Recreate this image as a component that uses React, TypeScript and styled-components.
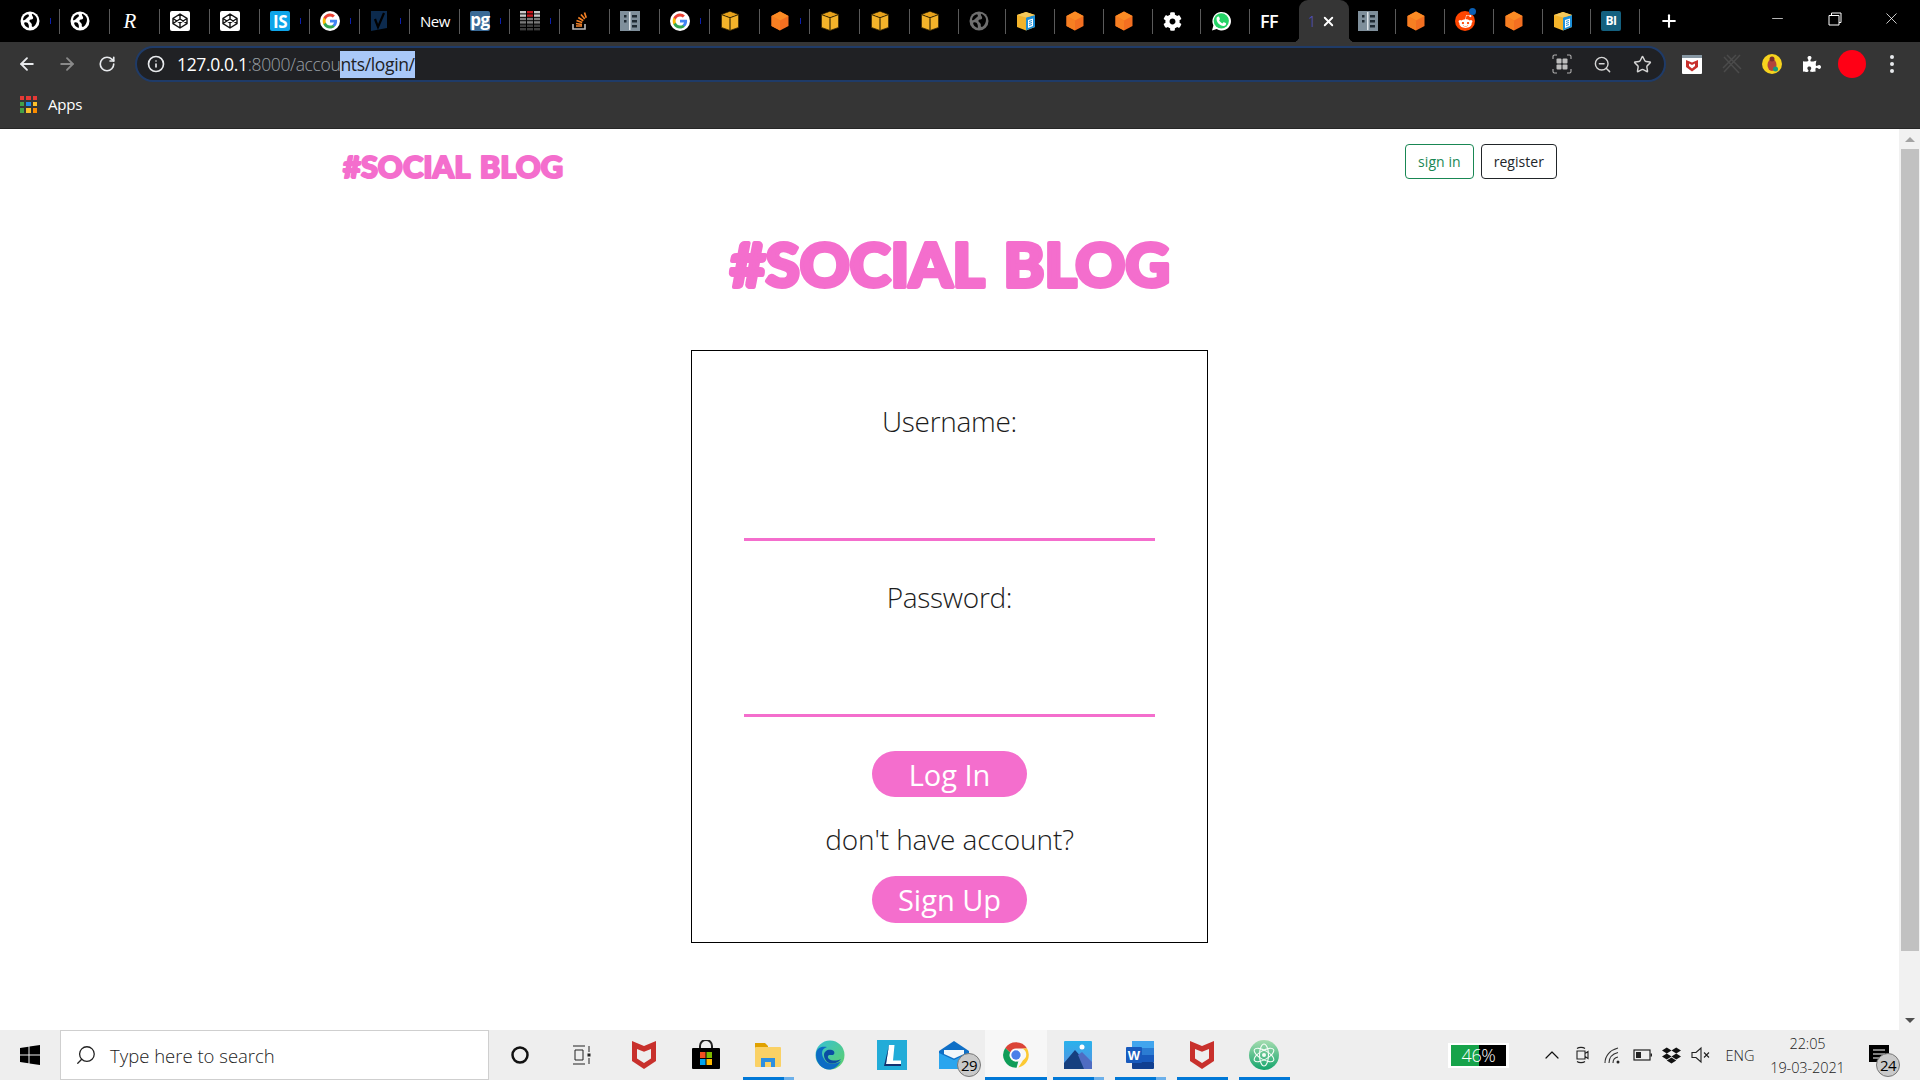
import React from 'react';
import styled, { createGlobalStyle } from 'styled-components';
import { ArrowLeft, ArrowRight, RotateCw, Info, ZoomOut, Star, Plus, X, Minus, Search, ChevronUp } from 'lucide-react';
import { FaCog, FaDropbox, FaPuzzlePiece, FaRedditAlien } from 'react-icons/fa';

const PINK = '#f46ecd';
const UI_FONT = '"Open Sans", "Noto Sans", sans-serif';

const Global = createGlobalStyle`
  html, body { margin: 0; padding: 0; height: 1080px; overflow: hidden; background: #fff; }
  * { box-sizing: border-box; }
  body { font-family: ${UI_FONT}; }
`;

const Shell = styled.div`
  width: 1920px; height: 1080px; display: flex; flex-direction: column; overflow: hidden;
`;

/* ---------- tab strip ---------- */
const TabStrip = styled.div`
  height: 42px; background: #000; display: flex; align-items: stretch; padding-left: 10px; flex: none;
`;
const Tab = styled.div<{ $w: number; $pad: number; $last?: boolean }>`
  width: ${p => p.$w}px; padding-left: ${p => p.$pad}px; flex: none; display: flex; align-items: center; position: relative;
  &::after {
    content: ''; position: absolute; right: 0; top: 9px; height: 25px; width: 1px; background: #5a5a5a;
    display: ${p => (p.$last ? 'none' : 'block')};
  }
`;
const TabMark = styled.i`
  width: 1px; height: 6px; background: #0b1fb0; margin-left: 10px; flex: none;
`;
const IconText = styled.span<{ $size: number; $weight?: number }>`
  color: #fff; font-size: ${p => p.$size}px; font-weight: ${p => p.$weight ?? 400}; font-family: ${UI_FONT}; letter-spacing: -0.5px; white-space: nowrap;
`;
const ActiveTab = styled.div`
  width: 50px; flex: none; background: #353535; border-radius: 9px 9px 0 0; position: relative; display: flex;
  align-items: center; color: #fff; padding-left: 9px; gap: 5px;
  &::before, &::after { content: ''; position: absolute; bottom: 0; width: 6px; height: 6px; }
  &::before { left: -6px; background: radial-gradient(circle at 0 0, #000 6px, #353535 6.5px); }
  &::after { right: -6px; background: radial-gradient(circle at 100% 0, #000 6px, #353535 6.5px); }
`;
const TabNumber = styled.span`
  color: #5a55d8; font-size: 14px; font-weight: 300; font-family: ${UI_FONT};
`;
const NewTabButton = styled.div`
  width: 57px; display: flex; align-items: center; justify-content: center; color: #fff; flex: none;
`;
const WindowControls = styled.div`
  margin-left: auto; display: flex;
`;
const WindowControl = styled.div`
  width: 57px; height: 37px; display: flex; align-items: center; justify-content: center; color: #fff;
`;

/* ---------- toolbar ---------- */
const Toolbar = styled.div`
  height: 44px; background: #353535; display: flex; align-items: center; padding: 0 8px 0 7px; flex: none;
`;
const ToolCell = styled.div<{ $dim?: boolean }>`
  width: 40px; height: 36px; flex: none; display: flex; align-items: center; justify-content: center;
  color: ${p => (p.$dim ? '#8a8a8a' : '#e8eaed')};
`;
const AddressBar = styled.div`
  flex: 1; height: 36px; margin: 0 6px 0 8px; background: #202124; border: 2px solid #1f3b68; border-radius: 18px;
  display: flex; align-items: center; padding: 0 2px 0 10px; color: #e8eaed;
`;
const Url = styled.div`
  margin-left: 12px; font-size: 17.5px; font-family: ${UI_FONT}; display: flex; align-items: center; letter-spacing: -0.35px;
  flex: 1; font-weight: 300; white-space: nowrap;
`;
const UrlHost = styled.span` color: #fff; font-weight: 400; `;
const UrlPath = styled.span` color: #9aa0a6; `;
const UrlSelected = styled.span`
  background: #a9c8f8; color: #202124; line-height: 27px; font-weight: 400;
`;
const BookmarkBar = styled.div`
  height: 43px; background: #353535; display: flex; align-items: center; padding: 0 0 6px 20px; gap: 11px; flex: none;
  border-bottom: 1px solid #262626;
`;
const AppsGrid = styled.div`
  width: 17px; height: 17px; display: grid; grid-template-columns: repeat(3, 1fr); grid-template-rows: repeat(3, 1fr); gap: 2px;
`;
const AppsDot = styled.i<{ $c: string }>` background: ${p => p.$c}; `;
const BookmarkLabel = styled.span`
  color: #fff; font-size: 15px; font-family: ${UI_FONT}; letter-spacing: -0.2px;
`;

/* ---------- page ---------- */
const Viewport = styled.div`
  flex: 1; display: flex; min-height: 0; background: #fff;
`;
const Page = styled.main`
  flex: 1; display: flex; flex-direction: column; align-items: center; padding-top: 15px; min-width: 0; color: #212529;
`;
const Nav = styled.nav`
  width: 1215px; height: 35px; display: flex; align-items: flex-start; justify-content: space-between;
`;
const NavLogo = styled.svg`
  width: 222px; height: 30px; margin-top: 9px; overflow: visible;
`;
const NavActions = styled.div`
  display: flex; gap: 7px;
`;
const OutlineButton = styled.a<{ $c: string }>`
  height: 35px; padding: 0 12px; border: 1px solid ${p => p.$c}; border-radius: 4px; color: ${p => p.$c}; font-size: 14px;
  font-family: ${UI_FONT}; display: flex; align-items: center; letter-spacing: 0.05px; font-weight: 400;
`;
const HeroLogo = styled.svg`
  width: 444px; height: 60px; margin-top: 58px; overflow: visible; flex: none;
`;
const Card = styled.form`
  width: 517px; height: 593px; margin-top: 53px; border: 1px solid #000; padding: 49px 0 0; display: flex;
  flex-direction: column; align-items: center; flex: none;
`;
const Label = styled.label`
  font-size: 28px; line-height: 42px; font-weight: 300; color: #1c1c1c; font-family: ${UI_FONT}; letter-spacing: -0.3px;
`;
const Field = styled.input<{ $mb: number }>`
  display: block; width: 411px; height: 99px; border: none; border-bottom: 3px solid ${PINK}; background: transparent; outline: none;
  margin-bottom: ${p => p.$mb}px; flex: none;
`;
const PillButton = styled.button<{ $h: number }>`
  width: 155px; height: ${p => p.$h}px; border: none; border-radius: 24px; background: ${PINK}; color: #fff;
  font-family: ${UI_FONT}; font-size: 29px; padding: 0; flex: none; line-height: 1;
`;
const Prompt = styled.p`
  margin: 21px 0 16px; font-size: 28px; line-height: 42px; font-weight: 300; color: #1c1c1c; font-family: ${UI_FONT}; letter-spacing: -0.1px;
`;

/* ---------- scrollbar ---------- */
const Scrollbar = styled.div`
  width: 21px; flex: none; background: #f1f1f1; display: flex; flex-direction: column; align-items: center;
`;
const ScrollArrow = styled.div<{ $down?: boolean }>`
  height: 20px; width: 100%; display: flex; align-items: center; justify-content: center; margin-top: ${p => (p.$down ? 'auto' : 0)};
  &::after {
    content: ''; border-left: 5px solid transparent; border-right: 5px solid transparent;
    ${p => (p.$down ? 'border-top: 5px solid #505050;' : 'border-bottom: 5px solid #a3a3a3;')}
  }
`;
const ScrollThumb = styled.div`
  width: 18px; height: 802px; background: #c1c1c1; flex: none;
`;

/* ---------- taskbar ---------- */
const Taskbar = styled.footer`
  height: 50px; background: #eeeeee; display: flex; align-items: center; flex: none; color: #111;
`;
const StartCell = styled.div`
  width: 60px; height: 50px; display: flex; align-items: center; justify-content: center; flex: none;
`;
const SearchBox = styled.div`
  width: 429px; height: 50px; background: #fff; border: 1px solid #cfcfcf; display: flex; align-items: center; padding-left: 14px; flex: none;
`;
const SearchText = styled.span`
  margin-left: 13px; font-size: 18.5px; font-weight: 300; font-family: ${UI_FONT}; color: #222; letter-spacing: 0;
`;
const TaskCell = styled.div<{ $on?: boolean; $active?: boolean; $split?: boolean }>`
  width: 62px; height: 50px; flex: none; display: flex; align-items: center; justify-content: center; position: relative;
  background: ${p => (p.$active ? '#f7f7f7' : 'transparent')};
  &::after {
    content: ''; position: absolute; bottom: 0; left: 6px; right: 5px; height: 3px;
    background: ${p => p.$split
      ? 'linear-gradient(to right, #0078d7 0 80%, #6cb0ea 80% 100%)'
      : '#0078d7'};
    display: ${p => (p.$on ? 'block' : 'none')};
    ${p => p.$active ? 'left: 0; right: 0;' : ''}
  }
`;
const Badge = styled.span<{ $r: number; $b: number }>`
  position: absolute; right: ${p => p.$r}px; bottom: ${p => p.$b}px; width: 24px; height: 24px; border-radius: 50%;
  background: #c9c9c9; border: 1px solid #777; display: flex; align-items: center; justify-content: center; font-size: 15px;
  color: #000; font-family: ${UI_FONT}; font-weight: 400; letter-spacing: -0.5px;
`;
const Tray = styled.div`
  margin-left: auto; display: flex; align-items: center; padding-right: 12px; height: 50px;
`;
const Meter = styled.div`
  width: 61px; height: 25px; background: #fff; padding: 2px 3px; margin-right: 28px; display: flex; position: relative; flex: none;
`;
const MeterFill = styled.div`
  flex: 1; display: flex; align-items: center; justify-content: center; color: #fff; font-size: 18px; font-weight: 300; font-family: ${UI_FONT};
  background: linear-gradient(to right, #16a34a 0 51%, #000 51% 100%); letter-spacing: -0.3px;
`;
const TrayCell = styled.div<{ $w: number }>`
  width: ${p => p.$w}px; height: 50px; flex: none; display: flex; align-items: center; justify-content: center; position: relative;
`;
const TrayText = styled.span`
  font-size: 14.5px; font-family: ${UI_FONT}; font-weight: 300; color: #222;
`;
const Clock = styled.div`
  width: 85px; flex: none; display: flex; flex-direction: column; align-items: center; font-size: 14.5px; line-height: 24px;
  font-family: ${UI_FONT}; font-weight: 300; color: #222; letter-spacing: -0.1px; padding-top: 1px;
`;

/* ---------- icons ---------- */
const Svg = styled.svg<{ $s?: number }>`
  width: ${p => p.$s ?? 20}px; height: ${p => p.$s ?? 20}px; flex: none; display: block;
`;

const Cube = ({ fill = '#f3b32a' }: { fill?: string }) => (
  <Svg viewBox="0 0 20 20">
    <path d="M10 .5 18.500 3.500V16.500L10 19.500 1.500 16.500V3.500Z" fill={fill} stroke="#3a2a05" strokeWidth=".8" />
    <path d="M1.500 3.500 10 6.500 18.500 3.500M10 6.500V19.500" fill="none" stroke="#3a2a05" strokeWidth="1.200" />
    <path d="M10 1 17 3.500 10 6 3 3.500Z" fill="#e8a21b" />
  </Svg>
);
const OrangeCube = () => (
  <Svg viewBox="0 0 20 20">
    <path d="M10 .5 18.500 5V15L10 19.500 1.500 15V5Z" fill="#f36f21" />
    <path d="M10 .5 18.500 5 10 9.500 1.500 5Z" fill="#fb8b24" />
    <path d="M1.500 5 10 9.500V19.500L1.500 15Z" fill="#f77f22" />
  </Svg>
);
const BookCube = () => (
  <Svg viewBox="0 0 20 20">
    <path d="M1 4 10 1 19 4V16L10 19.500 1 16Z" fill="#f3b32a" />
    <path d="M10 6.500 19 4V16L10 19.500Z" fill="#1c8fd8" />
    <path d="M1 4 10 1 19 4 10 6.500Z" fill="#f5c95b" />
    <path d="M12 9 17 7.500V15L12 17Z" fill="#fff" />
    <path d="M13 10.500 16 9.500M13 12.500 16 11.500M13 14.500 16 13.500" stroke="#1c8fd8" strokeWidth="1" />
  </Svg>
);
const Globe = ({ disc = '#fff', land = '#000' }: { disc?: string; land?: string }) => (
  <Svg viewBox="0 0 20 20">
    <circle cx="10" cy="10" r="9.500" fill={disc} />
    <path d="M3 9C3 6 5 3.800 8 3.200 9.500 4 9 5.500 7.800 6.300 6.500 7.200 6 8.500 4.500 9 3.800 9.300 3.300 9.300 3 9Z" fill={land} />
    <path d="M12 2.800C14.500 3.600 16.500 5.500 17 8 17.200 11 16 14 13.500 15.800 12.500 16.300 11.500 15.500 11.800 14.300 12.200 13 11 12 10 11 8.800 10 9.500 8.500 11 8.500 12.800 8.600 13.500 7.500 13 6 12.500 5 11.500 4 12 2.800Z" fill={land} />
    <path d="M5 11.500C6.500 11 8 12 8.500 13.500 9 15 9 16.500 8.500 17 6 16.200 4.300 14 4 11.800Z" fill={land} />
  </Svg>
);
const Codepen = () => (
  <Svg viewBox="0 0 20 20">
    <rect width="20" height="20" rx="2" fill="#fff" />
    <path d="M10 3 17 7.500V12.500L10 17 3 12.500V7.500ZM3 7.500 10 12 17 7.500M3 12.500 10 8 17 12.500M10 3V8M10 12V17" fill="none" stroke="#111" strokeWidth="1.400" />
  </Svg>
);
const GoogleG = () => (
  <Svg viewBox="0 0 48 48">
    <circle cx="24" cy="24" r="24" fill="#fff" />
    <path fill="#4285f4" d="M41 24.500c0-1.200-.1-2.400-.3-3.500H24v6.700h9.600c-.4 2.200-1.700 4.100-3.500 5.300v4.400h5.700C39.100 34.300 41 29.800 41 24.500Z" />
    <path fill="#34a853" d="M24 42c4.700 0 8.700-1.600 11.700-4.300L30 33.300c-1.600 1.100-3.600 1.700-6 1.700-4.600 0-8.500-3.100-9.900-7.300H8.300v4.500C11.200 38 17.100 42 24 42Z" />
    <path fill="#fbbc05" d="M14.100 27.700c-.4-1.100-.6-2.300-.6-3.700s.2-2.600.6-3.700v-4.500H8.300C7.100 18.100 6.400 21 6.400 24s.7 5.900 1.900 8.200Z" />
    <path fill="#ea4335" d="M24 13c2.600 0 4.900.9 6.800 2.700l5-5C32.700 7.800 28.700 6 24 6 17.100 6 11.200 10 8.300 15.800l5.800 4.500C15.500 16.100 19.400 13 24 13Z" />
  </Svg>
);
const CheckFlag = () => (
  <Svg viewBox="0 0 20 20">
    <path d="M1 0H17V17L1 20Z" fill="#0c2a4d" />
    <path d="M5 8 8 16 14 2" fill="none" stroke="#000" strokeWidth="2.200" />
  </Svg>
);
const SquareText = styled.span<{ $bg: string; $size: number; $align?: string }>`
  width: 20px; height: 20px; background: ${p => p.$bg}; border-radius: 2px; color: #fff; font-family: ${UI_FONT}; font-size: ${p => p.$size}px;
  font-weight: 700; display: flex; align-items: ${p => p.$align ?? 'center'}; justify-content: center; flex: none; letter-spacing: -0.5px; line-height: 1;
`;
const RLogo = styled.span`
  color: #fff; font-family: "Liberation Serif", serif; font-style: italic; font-size: 21px; font-weight: 400; width: 20px; text-align: center;
`;
const BarGrid = () => (
  <Svg viewBox="0 0 20 20">
    {[0, 1, 2, 3, 4, 5].map(r =>
      [0, 1, 2].map(c => (
        <rect key={`${r}${c}`} x={c * 7} y={r * 3.4} width="6" height="2.4"
          fill={c === 1 && r < 2 ? '#c4161c' : r < 2 ? '#c8c8c8' : r < 4 ? '#7a7a7a' : '#3c3c3c'} />
      ))
    )}
  </Svg>
);
const StackOverflow = () => (
  <Svg viewBox="0 0 20 20">
    <path d="M3 13V18H15V13" fill="none" stroke="#bcbbbb" strokeWidth="1.600" />
    <path d="M6 15H12M6 12.500 12 13.500M6.500 9.500 12.200 11.500M8.300 6.500 13.300 9.700M11 3.500 14.800 8M14.500 1.500 16.200 6.800" stroke="#f48024" strokeWidth="1.700" fill="none" />
  </Svg>
);
const Columns = () => (
  <Svg viewBox="0 0 20 20">
    <rect width="20" height="20" fill="#7f8f9b" />
    <rect x="9" y="1" width="1.500" height="18" fill="#dfe5ea" />
    <rect x="12" y="4" width="5" height="2.500" fill="#1f2a33" />
    <rect x="12" y="9" width="5" height="2.500" fill="#1f2a33" />
    <rect x="12" y="14" width="5" height="2.500" fill="#1f2a33" />
    <rect x="4" y="4" width="2.500" height="2.500" fill="#1f2a33" />
    <rect x="4" y="9" width="2.500" height="2.500" fill="#1f2a33" />
  </Svg>
);
const Whatsapp = () => (
  <Svg viewBox="0 0 20 20">
    <path d="M1 19.500 2.400 14.500A9.300 9.300 0 1 1 5.700 18.100Z" fill="#fff" />
    <circle cx="10.300" cy="9.800" r="7.600" fill="#25d366" />
    <path d="M7.200 5.500c.5 0 .8 0 1 .6l.7 1.700c.1.300 0 .6-.2.800l-.6.7c.7 1.400 1.800 2.400 3.300 3.100l.8-.9c.2-.3.500-.3.800-.2l1.700.8c.4.200.5.500.4.900-.2 1.200-1.300 2-2.600 1.900C8.700 14.500 5.700 11.700 5.500 8c0-1.300.7-2.500 1.700-2.500Z" fill="#fff" />
  </Svg>
);
const RedditIcon = styled.span`
  width: 20px; height: 20px; border-radius: 50%; background: #ff4500; position: relative; display: flex; align-items: center;
  justify-content: center; color: #fff; flex: none;
  &::after {
    content: ''; position: absolute; top: -3px; right: -1px; width: 7px; height: 7px; background: #0a5fb4; border-radius: 50%;
  }
`;
const ChromeLogo = () => (
  <Svg $s={28} viewBox="0 0 48 48">
    <path d="M24 2a22 22 0 0 1 19 11H24a11 11 0 0 0-10 6.500L5.600 12A22 22 0 0 1 24 2Z" fill="#db4437" />
    <path d="M43 13a22 22 0 0 1-15 32.600L36 33a11 11 0 0 0-2-20Z" fill="#fcc934" />
    <path d="M5.600 12 14 19.500 A11 11 0 0 0 28 34.500L25 46A22 22 0 0 1 5.600 12Z" fill="#0f9d58" />
    <circle cx="24" cy="24" r="10" fill="#fff" />
    <circle cx="24" cy="24" r="8" fill="#4a7fe8" />
  </Svg>
);
const McAfee = ({ s = 30 }: { s?: number }) => (
  <Svg $s={s} viewBox="0 0 26 30">
    <path fillRule="evenodd" d="M1 1 13 6 25 1V21L13 29 1 21ZM6 9V18.500L13 23 20 18.500V9L13 11.800Z" fill="#c8302c" />
  </Svg>
);
const WindowsLogo = () => (
  <Svg viewBox="0 0 20 20">
    <path d="M0 3 8.500 1.800V9.500H0ZM9.500 1.600 20 0V9.500H9.500ZM0 10.500H8.500V18.200L0 17ZM9.500 10.500H20V20L9.500 18.400Z" fill="#000" />
  </Svg>
);
const Store = () => (
  <Svg $s={30} viewBox="0 0 30 30">
    <path d="M9 9V6a6 6 0 0 1 12 0V9" fill="none" stroke="#222" strokeWidth="2" />
    <rect x="1" y="8" width="28" height="21" rx="1" fill="#000" />
    <rect x="9" y="12" width="5.500" height="6" fill="#f25022" />
    <rect x="15.500" y="12" width="5.500" height="6" fill="#7fba00" />
    <rect x="9" y="19" width="5.500" height="6" fill="#00a4ef" />
    <rect x="15.500" y="19" width="5.500" height="6" fill="#ffb900" />
  </Svg>
);
const Folder = () => (
  <Svg $s={28} viewBox="0 0 28 28">
    <path d="M1 2h10l3 3h0v3H1Z" fill="#e0a100" />
    <rect x="1" y="6" width="26" height="20" rx="1" fill="#fad165" />
    <path d="M7 17h14v9h-4v-5h-6v5H7Z" fill="#2d8fe0" />
  </Svg>
);
const Edge = () => (
  <Svg $s={30} viewBox="0 0 30 30">
    <defs>
      <linearGradient id="edgeA" x1="0" y1="0" x2="1" y2="1">
        <stop offset="0" stopColor="#36c1d6" />
        <stop offset="1" stopColor="#5fd068" />
      </linearGradient>
    </defs>
    <circle cx="15" cy="15" r="14.500" fill="url(#edgeA)" />
    <path d="M1 15C1 8 6 6 12 7 6 9 6 14 9 19c3 6 11 6 17 2-3 6-8 8.500-12 8.500C7 29.500 1 23 1 15Z" fill="#0c6cc4" />
    <path d="M9 15c0-4 4-6 8-5 3 1 3 4 1 5h-3c-2 0-3 2-1 4 3 2 8 2 12 0-3 4-7 5-10 4.500C12 23 9 19 9 15Z" fill="#0a4da3" />
  </Svg>
);
const LApp = () => (
  <Svg $s={30} viewBox="0 0 30 30">
    <rect width="30" height="30" fill="#22acd8" />
    <path d="M12 5 9 24H24V20.500H16L17.500 5Z" fill="#fff" />
    <path d="M12 5 7 26H24L24 24H9Z" fill="#15306e" />
  </Svg>
);
const Mail = () => (
  <Svg $s={30} viewBox="0 0 30 30">
    <path d="M0 11 15 1 30 11V29H0Z" fill="#0f6fc6" />
    <path d="M0 13 15 20 30 13V29H0Z" fill="#2aa5ee" />
    <path d="M5 10H25V14L15 18.500 5 14Z" fill="#f2f7fb" />
  </Svg>
);
const Photos = () => (
  <Svg $s={28} viewBox="0 0 28 28">
    <defs>
      <linearGradient id="ph" x1="0" y1="0" x2="0" y2="1">
        <stop offset="0" stopColor="#29b2ec" />
        <stop offset="1" stopColor="#5c8fe0" />
      </linearGradient>
    </defs>
    <rect width="28" height="28" rx="1" fill="url(#ph)" />
    <circle cx="18" cy="6" r="2.500" fill="#fff" />
    <path d="M0 22 11 9 28 28H0Z" fill="#16407f" />
    <path d="M14 14 18 11 28 21V28H20Z" fill="#4f6cc2" />
  </Svg>
);
const Word = () => (
  <Svg $s={30} viewBox="0 0 30 30">
    <rect x="7" y="1" width="22" height="7" fill="#41a5ee" />
    <rect x="7" y="8" width="22" height="7" fill="#2b7cd3" />
    <rect x="7" y="15" width="22" height="7" fill="#185abd" />
    <rect x="7" y="22" width="22" height="7" rx="1" fill="#103f91" />
    <rect x="1" y="7" width="16" height="16" rx="1" fill="#185abd" />
    <text x="9" y="19.500" textAnchor="middle" fontSize="13" fontWeight="700" fill="#fff" fontFamily="Liberation Sans, sans-serif">W</text>
  </Svg>
);
const Atom = () => (
  <Svg $s={30} viewBox="0 0 30 30">
    <defs>
      <linearGradient id="atm" x1="0" y1="0" x2="0" y2="1">
        <stop offset="0" stopColor="#a6ddb0" />
        <stop offset="1" stopColor="#14a56c" />
      </linearGradient>
    </defs>
    <circle cx="15" cy="15" r="15" fill="url(#atm)" />
    <g fill="none" stroke="#f3fbf5" strokeWidth="1.100">
      <ellipse cx="15" cy="15" rx="4.500" ry="11" />
      <ellipse cx="15" cy="15" rx="4.500" ry="11" transform="rotate(60 15 15)" />
      <ellipse cx="15" cy="15" rx="4.500" ry="11" transform="rotate(-60 15 15)" />
    </g>
    <circle cx="15" cy="15" r="2" fill="#f3fbf5" />
  </Svg>
);

type TabDef = { icon: React.ReactNode; w?: number; pad?: number; mark?: boolean; last?: boolean };

const leftTabs: TabDef[] = [
  { icon: <Globe />, mark: true },
  { icon: <Globe /> },
  { icon: <RLogo>R</RLogo> },
  { icon: <Codepen /> },
  { icon: <Codepen /> },
  { icon: <SquareText $bg="#0ea5e9" $size={17}>IS</SquareText>, mark: true },
  { icon: <GoogleG />, mark: true },
  { icon: <CheckFlag />, mark: true },
  { icon: <IconText $size={15}>New</IconText> },
  { icon: <SquareText $bg="#3a6a96" $size={17} $align="flex-start">pg</SquareText>, mark: true },
  { icon: <BarGrid />, mark: true },
  { icon: <StackOverflow /> },
  { icon: <Columns /> },
  { icon: <GoogleG />, mark: true },
  { icon: <Cube /> },
  { icon: <OrangeCube />, mark: true },
  { icon: <Cube /> },
  { icon: <Cube /> },
  { icon: <Cube />, w: 49 },
  { icon: <Globe disc="#6f6f6f" land="#000" />, w: 47 },
  { icon: <BookCube />, w: 49 },
  { icon: <OrangeCube />, w: 49 },
  { icon: <OrangeCube />, w: 49 },
  { icon: <FaCog size={19} color="#fff" />, w: 48 },
  { icon: <Whatsapp />, w: 49 },
  { icon: <IconText $size={18} $weight={600}>FF</IconText>, w: 49, last: true },
];
const rightTabs: TabDef[] = [
  { icon: <Columns />, w: 47, pad: 9 },
  { icon: <OrangeCube />, w: 49 },
  {
    icon: <RedditIcon><FaRedditAlien size={15} /></RedditIcon>,
    w: 49,
  },
  { icon: <OrangeCube />, w: 49 },
  { icon: <BookCube />, w: 48 },
  { icon: <SquareText $bg="#14607f" $size={12}>BI</SquareText>, w: 49 },
];

const TabItem = ({ t }: { t: TabDef }) => (
  <Tab $w={t.w ?? 50} $pad={t.pad ?? 10} $last={t.last}>
    {t.icon}
    {t.mark && <TabMark />}
  </Tab>
);

const appsColors = ['#e53935', '#e53935', '#e53935', '#43a047', '#1e88e5', '#fbc02d', '#43a047', '#fbc02d', '#fb8c00'];

const Wordmark = ({ size, stroke, width }: { size: number; stroke: number; width: number }) => (
  <text
    x={stroke / 2}
    y={size * 0.84}
    fontFamily="Lato, sans-serif"
    fontWeight={900}
    fontSize={size}
    wordSpacing={size * 0.1}
    textLength={width - stroke}
    lengthAdjust="spacingAndGlyphs"
    fill={PINK}
    stroke={PINK}
    strokeWidth={stroke}
    strokeLinejoin="round"
  >
    #SOCIAL BLOG
  </text>
);

export default function App() {
  return (
    <Shell>
      <Global />
      <TabStrip>
        {leftTabs.map((t, i) => <TabItem key={i} t={t} />)}
        <ActiveTab>
          <TabNumber>1</TabNumber>
          <X size={15} strokeWidth={3} />
        </ActiveTab>
        {rightTabs.map((t, i) => <TabItem key={i} t={t} />)}
        <NewTabButton><Plus size={20} strokeWidth={2.5} /></NewTabButton>
        <WindowControls>
          <WindowControl><Minus size={17} strokeWidth={1} /></WindowControl>
          <WindowControl>
            <Svg $s={14} viewBox="0 0 14 14">
              <path d="M3.500 3V1H13V10.500H11M1 3.500H11V13H1Z" fill="none" stroke="#fff" strokeWidth="1" />
            </Svg>
          </WindowControl>
          <WindowControl><X size={19} strokeWidth={1} /></WindowControl>
        </WindowControls>
      </TabStrip>

      <Toolbar>
        <ToolCell><ArrowLeft size={20} strokeWidth={2.2} /></ToolCell>
        <ToolCell $dim><ArrowRight size={20} strokeWidth={2.2} /></ToolCell>
        <ToolCell><RotateCw size={18} strokeWidth={2.2} /></ToolCell>
        <AddressBar>
          <Info size={18} strokeWidth={2.2} />
          <Url>
            <UrlHost>127.0.0.1</UrlHost>
            <UrlPath>:8000/accou</UrlPath>
            <UrlSelected>nts/login/</UrlSelected>
          </Url>
          <ToolCell>
            <Svg viewBox="0 0 20 20">
              <path d="M1 5V2.500A1.500 1.500 0 0 1 2.500 1H5M15 1h2.500A1.500 1.500 0 0 1 19 2.500V5M19 15v2.500a1.500 1.500 0 0 1-1.500 1.500H15M5 19H2.500A1.500 1.500 0 0 1 1 17.500V15" fill="none" stroke="#b0b0b0" strokeWidth="1.100" />
              <rect x="4.500" y="4.500" width="5" height="5" rx="1" fill="#bdbdbd" />
              <rect x="10.500" y="4.500" width="5" height="5" rx="1" fill="#bdbdbd" />
              <rect x="4.500" y="10.500" width="5" height="5" rx="1" fill="#bdbdbd" />
              <rect x="10.500" y="10.500" width="5" height="5" rx="1" fill="#bdbdbd" />
            </Svg>
          </ToolCell>
          <ToolCell><ZoomOut size={19} strokeWidth={1.8} color="#d5d5d5" /></ToolCell>
          <ToolCell><Star size={19} strokeWidth={1.8} color="#d5d5d5" /></ToolCell>
        </AddressBar>
        <ToolCell>
          <Svg viewBox="0 0 20 20">
            <rect y="1" width="20" height="19" rx="1" fill="#fff" />
            <rect y="1" width="20" height="3" fill="#8697a3" />
            <path d="M4 6 10 8.500 16 6V13L10 17.500 4 13Z M7 9.500V12L10 14.500 13 12V9.500L10 11Z" fill="#c8302c" fillRule="evenodd" />
          </Svg>
        </ToolCell>
        <ToolCell>
          <Svg viewBox="0 0 20 20">
            <path d="M2 3 17 19M18 1 2 18M5 1 19 15M14 1 1 14" stroke="#4b4b4b" strokeWidth="1.500" fill="none" />
          </Svg>
        </ToolCell>
        <ToolCell>
          <Svg viewBox="0 0 20 20">
            <circle cx="10" cy="10" r="10" fill="#f7d31e" />
            <ellipse cx="10" cy="11" rx="4.500" ry="6" fill="#b3443c" />
            <circle cx="10" cy="5" r="2.500" fill="#7a2f2f" />
            <circle cx="13.500" cy="15" r="2.500" fill="#179a7b" />
          </Svg>
        </ToolCell>
        <ToolCell><FaPuzzlePiece size={18} color="#fff" /></ToolCell>
        <ToolCell>
          <Svg $s={28} viewBox="0 0 28 28"><circle cx="14" cy="14" r="14" fill="#ff0015" /></Svg>
        </ToolCell>
        <ToolCell>
          <Svg viewBox="0 0 20 20">
            <circle cx="10" cy="3" r="2" fill="#e8eaed" />
            <circle cx="10" cy="10" r="2" fill="#e8eaed" />
            <circle cx="10" cy="17" r="2" fill="#e8eaed" />
          </Svg>
        </ToolCell>
      </Toolbar>

      <BookmarkBar>
        <AppsGrid>{appsColors.map((c, i) => <AppsDot key={i} $c={c} />)}</AppsGrid>
        <BookmarkLabel>Apps</BookmarkLabel>
      </BookmarkBar>

      <Viewport>
        <Page>
          <Nav>
            <NavLogo viewBox="0 0 222 30"><Wordmark size={30} stroke={2} width={222} /></NavLogo>
            <NavActions>
              <OutlineButton $c="#198754">sign in</OutlineButton>
              <OutlineButton $c="#212529">register</OutlineButton>
            </NavActions>
          </Nav>
          <HeroLogo viewBox="0 0 444 60"><Wordmark size={60} stroke={4} width={444} /></HeroLogo>
          <Card onSubmit={e => e.preventDefault()}>
            <Label htmlFor="username">Username:</Label>
            <Field id="username" type="text" $mb={35} />
            <Label htmlFor="password">Password:</Label>
            <Field id="password" type="password" $mb={34} />
            <PillButton type="submit" $h={46}>Log In</PillButton>
            <Prompt>don't have account?</Prompt>
            <PillButton type="button" $h={47}>Sign Up</PillButton>
          </Card>
        </Page>
        <Scrollbar>
          <ScrollArrow />
          <ScrollThumb />
          <ScrollArrow $down />
        </Scrollbar>
      </Viewport>

      <Taskbar>
        <StartCell><WindowsLogo /></StartCell>
        <SearchBox>
          <Search size={22} strokeWidth={1.4} color="#222" style={{ transform: 'scaleX(-1)' }} />
          <SearchText>Type here to search</SearchText>
        </SearchBox>
        <TaskCell>
          <Svg viewBox="0 0 20 20"><circle cx="10" cy="10" r="7.500" fill="none" stroke="#111" strokeWidth="2.500" /></Svg>
        </TaskCell>
        <TaskCell>
          <Svg viewBox="0 0 20 20">
            <path d="M1 1H13M1 19H13M3 5H11V15H3ZM17 1V7M17 13V19" fill="none" stroke="#222" strokeWidth="1" />
            <rect x="15.500" y="8.500" width="3" height="3" fill="#222" />
          </Svg>
        </TaskCell>
        <TaskCell><McAfee /></TaskCell>
        <TaskCell><Store /></TaskCell>
        <TaskCell $on $split><Folder /></TaskCell>
        <TaskCell><Edge /></TaskCell>
        <TaskCell><LApp /></TaskCell>
        <TaskCell><Mail /><Badge $r={4} $b={3}>29</Badge></TaskCell>
        <TaskCell $on $active><ChromeLogo /></TaskCell>
        <TaskCell $on $split><Photos /></TaskCell>
        <TaskCell $on $split><Word /></TaskCell>
        <TaskCell $on><McAfee /></TaskCell>
        <TaskCell $on><Atom /></TaskCell>
        <Tray>
          <Meter><MeterFill>46%</MeterFill></Meter>
          <TrayCell $w={30}><ChevronUp size={24} strokeWidth={1.2} /></TrayCell>
          <TrayCell $w={30}>
            <Svg viewBox="0 0 20 20">
              <path d="M5 6h8v8H5ZM13 8.500l3-2v7l-3-2M5 3.500C7 2 11 2 13 3.500M5 16.500C7 18 11 18 13 16.500" fill="none" stroke="#222" strokeWidth="1.100" />
            </Svg>
          </TrayCell>
          <TrayCell $w={31}>
            <Svg viewBox="0 0 20 20">
              <path d="M2 18C2 11 7 5 15 3M6 18C6 13 9 9 15 7.500M10 18C10 15 12 12.500 15 12" fill="none" stroke="#333" strokeWidth="1.100" />
              <circle cx="15" cy="17" r="1.500" fill="#222" />
            </Svg>
          </TrayCell>
          <TrayCell $w={29}>
            <Svg viewBox="0 0 20 20">
              <rect x="1" y="5" width="16" height="10" fill="none" stroke="#222" strokeWidth="1.200" />
              <rect x="3" y="7" width="5" height="6" fill="#222" />
              <rect x="17.500" y="8.500" width="1.500" height="3" fill="#222" />
            </Svg>
          </TrayCell>
          <TrayCell $w={29}><FaDropbox size={19} color="#111" /></TrayCell>
          <TrayCell $w={29}>
            <Svg viewBox="0 0 20 20">
              <path d="M1 7.500H5L10 3V17L5 12.500H1ZM13 7.500 18 12.500M18 7.500 13 12.500" fill="none" stroke="#222" strokeWidth="1.100" />
            </Svg>
          </TrayCell>
          <TrayCell $w={50}><TrayText>ENG</TrayText></TrayCell>
          <Clock>
            <span>22:05</span>
            <span>19-03-2021</span>
          </Clock>
          <TrayCell $w={58}>
            <Svg $s={22} viewBox="0 0 22 22">
              <path d="M1 1H21V18H1Z" fill="#000" />
              <path d="M5 6H17M5 10H17M5 14H17" stroke="#fff" strokeWidth="1" />
            </Svg>
            <Badge $r={8} $b={3}>24</Badge>
          </TrayCell>
        </Tray>
      </Taskbar>
    </Shell>
  );
}
